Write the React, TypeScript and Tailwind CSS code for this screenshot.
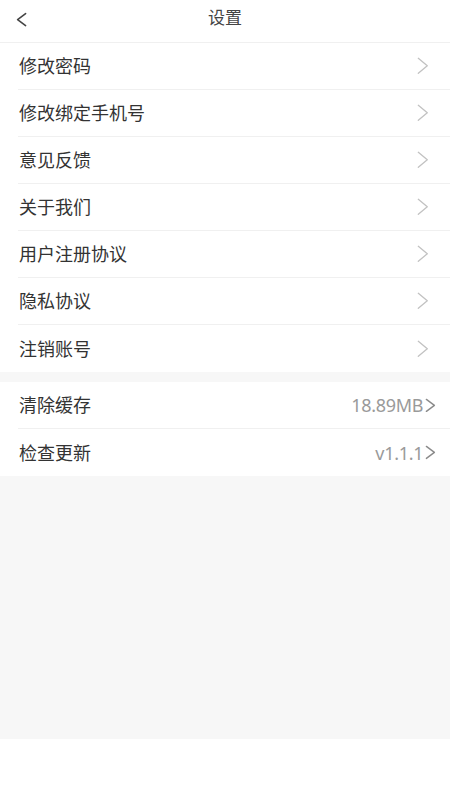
// Settings page: two grouped lists on a light gray page
const groupOne = ['修改密码', '修改绑定手机号', '意见反馈', '关于我们', '用户注册协议', '隐私协议', '注销账号'];

const groupTwo = [
  { label: '清除缓存', value: '18.89MB' },
  { label: '检查更新', value: 'v1.1.1' },
];

function Chevron({ w, h, color, stroke, flip }: { w: number; h: number; color: string; stroke: number; flip?: boolean }) {
  const pad = stroke;
  return (
    <svg width={w + pad * 2} height={h + pad * 2} viewBox={`0 0 ${w + pad * 2} ${h + pad * 2}`} fill="none">
      <polyline
        points={
          flip
            ? `${w + pad},${pad} ${pad},${h / 2 + pad} ${w + pad},${h + pad}`
            : `${pad},${pad} ${w + pad},${h / 2 + pad} ${pad},${h + pad}`
        }
        stroke={color}
        strokeWidth={stroke}
        strokeLinecap="round"
        strokeLinejoin="round"
      />
    </svg>
  );
}

function Row({ label, value, last }: { label: string; value?: string; last?: boolean }) {
  return (
    <div className="pl-[18px] bg-white">
      <div
        className={`h-[47px] flex items-center justify-between ${value ? 'pr-[14px]' : 'pr-[21px]'} ${
          last ? '' : 'border-b border-[#f0f0f0]'
        }`}
      >
        <span className="text-[18px] text-[#333] leading-none pl-[1px]">{label}</span>
        {value ? (
          <div className="flex items-center gap-[2px]">
            <span className="text-[18px] text-[#9a9a9a] leading-none tracking-[-0.3px]">{value}</span>
            <Chevron w={8} h={12} color="#8a8a8a" stroke={1.4} />
          </div>
        ) : (
          <Chevron w={9} h={15} color="#c2c2c2" stroke={1.3} />
        )}
      </div>
    </div>
  );
}

export default function App() {
  return (
    <div
      className="w-[450px] h-[800px] flex flex-col bg-white"
      style={{ fontFamily: '"Noto Sans", "Noto Sans CJK SC", sans-serif' }}
    >
      {/* Header */}
      <div className="h-[43px] shrink-0 relative flex items-center justify-center border-b border-[#f0f0f0]">
        <div className="absolute left-[16px] top-[12px]">
          <Chevron w={8} h={12} color="#444" stroke={1.6} flip />
        </div>
        <span className="text-[17px] text-[#444] -mt-[7px]">设置</span>
      </div>

      {/* Lists */}
      <div className="flex-1 bg-[#f7f7f7] flex flex-col">
        <div>
          {groupOne.map((label, i) => (
            <Row key={label} label={label} last={i === groupOne.length - 1} />
          ))}
        </div>
        <div className="mt-[10px]">
          {groupTwo.map((item, i) => (
            <Row key={item.label} label={item.label} value={item.value} last={i === groupTwo.length - 1} />
          ))}
        </div>
      </div>

      {/* Bottom safe area */}
      <div className="h-[61px] shrink-0 bg-white" />
    </div>
  );
}
